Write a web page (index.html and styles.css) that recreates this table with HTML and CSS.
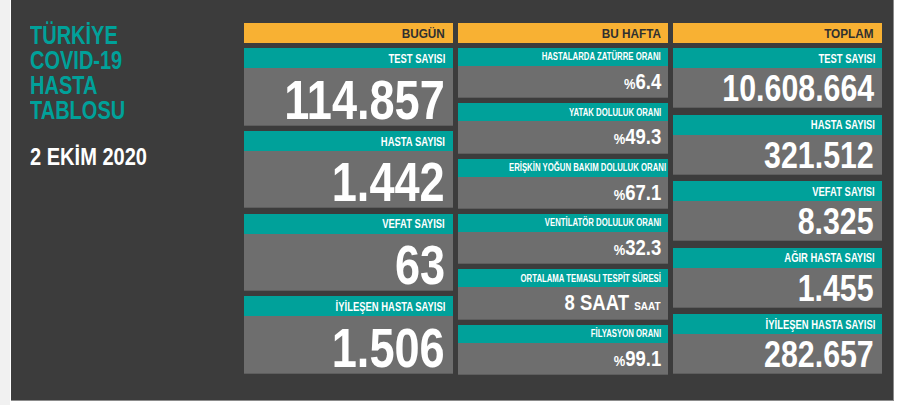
FILE: index.html
```html
<!DOCTYPE html>
<html lang="tr">
<head>
<meta charset="utf-8">
<title>Türkiye COVID-19 Hasta Tablosu</title>
<link rel="stylesheet" href="styles.css">
</head>
<body>
<div class="page">
  <div class="strip"></div>
  <main class="board">
    <div class="intro">
      <h1 class="title"><span class="t">TÜRKİYE</span><span class="t">COVID-19</span><span class="t">HASTA</span><span class="t">TABLOSU</span></h1>
      <div class="date"><span class="t">2 EKİM 2020</span></div>
    </div>
    <div class="grid">
      <section class="col col-today">
        <div class="head"><span class="t">BUGÜN</span></div>
        <div class="cards">
          <div class="card"><div class="label"><span class="t">TEST SAYISI</span></div><div class="value"><span class="t">114.857</span></div></div>
          <div class="card"><div class="label"><span class="t">HASTA SAYISI</span></div><div class="value"><span class="t">1.442</span></div></div>
          <div class="card"><div class="label"><span class="t">VEFAT SAYISI</span></div><div class="value"><span class="t">63</span></div></div>
          <div class="card"><div class="label"><span class="t">İYİLEŞEN HASTA SAYISI</span></div><div class="value"><span class="t">1.506</span></div></div>
        </div>
      </section>
      <section class="col col-week">
        <div class="head"><span class="t">BU HAFTA</span></div>
        <div class="cards">
          <div class="card"><div class="label"><span class="t">HASTALARDA ZATÜRRE ORANI</span></div><div class="value"><span class="t"><span class="pct">%</span>6.4</span></div></div>
          <div class="card"><div class="label"><span class="t">YATAK DOLULUK ORANI</span></div><div class="value"><span class="t"><span class="pct">%</span>49.3</span></div></div>
          <div class="card"><div class="label"><span class="t">ERİŞKİN YOĞUN BAKIM DOLULUK ORANI</span></div><div class="value"><span class="t"><span class="pct">%</span>67.1</span></div></div>
          <div class="card"><div class="label"><span class="t">VENTİLATÖR DOLULUK ORANI</span></div><div class="value"><span class="t"><span class="pct">%</span>32.3</span></div></div>
          <div class="card"><div class="label"><span class="t">ORTALAMA TEMASLI TESPİT SÜRESİ</span></div><div class="value"><span class="t">8 SAAT <span class="unit">SAAT</span></span></div></div>
          <div class="card"><div class="label"><span class="t">FİLYASYON ORANI</span></div><div class="value"><span class="t"><span class="pct">%</span>99.1</span></div></div>
        </div>
      </section>
      <section class="col col-total">
        <div class="head"><span class="t">TOPLAM</span></div>
        <div class="cards">
          <div class="card"><div class="label"><span class="t">TEST SAYISI</span></div><div class="value"><span class="t">10.608.664</span></div></div>
          <div class="card"><div class="label"><span class="t">HASTA SAYISI</span></div><div class="value"><span class="t">321.512</span></div></div>
          <div class="card"><div class="label"><span class="t">VEFAT SAYISI</span></div><div class="value"><span class="t">8.325</span></div></div>
          <div class="card"><div class="label"><span class="t">AĞIR HASTA SAYISI</span></div><div class="value"><span class="t">1.455</span></div></div>
          <div class="card"><div class="label"><span class="t">İYİLEŞEN HASTA SAYISI</span></div><div class="value"><span class="t">282.657</span></div></div>
        </div>
      </section>
    </div>
  </main>
</div>
</body>
</html>
```
FILE: styles.css
```css
* { box-sizing: border-box; margin: 0; padding: 0; }

html, body {
  width: 900px;
  height: 405px;
  background: #ffffff;
  overflow: hidden;
}

body {
  font-family: "Liberation Sans", Arial, sans-serif;
  font-weight: bold;
}

/* condensed look: narrow each text run horizontally */
.t {
  display: inline-block;
  white-space: nowrap;
  transform-origin: right center;
  vertical-align: top;
}

.page {
  display: flex;
  height: 405px;
}

.strip {
  width: 10px;
  height: 405px;
  background: #f1f1f1;
  margin-right: 1px;
}

.board {
  width: 883px;
  height: 401px;
  background: #3c3c3c;
  border-right: 1px solid #8c8c8c;
  border-bottom: 1px solid #8c8c8c;
  display: flex;
  padding-top: 23px;
}

.intro {
  width: 233px;
  padding-left: 19px;
}

.title {
  display: flex;
  flex-direction: column;
  align-items: flex-start;
  font-size: 25px;
  line-height: 25px;
  color: #00a19a;
  font-weight: bold;
}

.title .t {
  height: 25px;
  transform-origin: left center;
  transform: scaleX(0.8);
}

.date {
  margin-top: 22px;
  font-size: 24.3px;
  line-height: 24px;
  color: #ffffff;
}

.date .t {
  transform-origin: left center;
  transform: scaleX(0.825);
}

.grid {
  display: grid;
  grid-template-columns: 209px 210px 209px;
  column-gap: 5px;
  align-items: start;
}

.col {
  display: flex;
  flex-direction: column;
}

.head {
  height: 20px;
  background: #f8b133;
  color: #303030;
  text-align: right;
  font-size: 12.5px;
  line-height: 12.5px;
  padding: 4.7px 8px 0 0;
  margin-bottom: 5px;
}

.head .t { transform: scaleX(0.94); }

.col-week .head { padding-right: 7px; }

.cards {
  height: 326px;
  display: flex;
  flex-direction: column;
}

.col-today .cards { gap: 5.33px; }
.col-week .cards { gap: 5px; height: 327px; }
.col-total .cards { gap: 6.5px; }

.card {
  flex: 1 1 0;
  min-height: 0;
  display: flex;
  flex-direction: column;
}

.label {
  flex: none;
  height: 20px;
  background: #00a19a;
  color: #ffffff;
  text-align: right;
  font-size: 12.5px;
  line-height: 12.5px;
  padding: 4.7px 8px 0 0;
  white-space: nowrap;
}

.label .t { transform: scaleX(0.755); }

.value {
  flex: 1 1 0;
  min-height: 0;
  background: #6e6e6e;
  box-shadow: inset 0 -1px 0 rgba(0, 0, 0, 0.14);
  color: #ffffff;
  text-align: right;
  white-space: nowrap;
}

.value .t { transform: scaleX(0.82); }

.col-today .value {
  font-size: 55px;
  line-height: 52px;
  padding: 5.5px 8px 0 0;
}

.col-week .label {
  height: 18px;
  font-size: 10.3px;
  line-height: 10px;
  padding: 4.2px 7px 0 0;
}

.col-week .value {
  font-size: 21.5px;
  line-height: 22px;
  padding: 5px 7px 0 0;
}

.col-week .value .t { transform: scaleX(0.86); }

.pct {
  font-size: 15px;
}

.unit {
  font-size: 11.6px;
}

.col-total .label { padding-right: 7px; }

.col-total .value {
  font-size: 37px;
  line-height: 37px;
  padding: 2.4px 8px 0 0;
}
```
